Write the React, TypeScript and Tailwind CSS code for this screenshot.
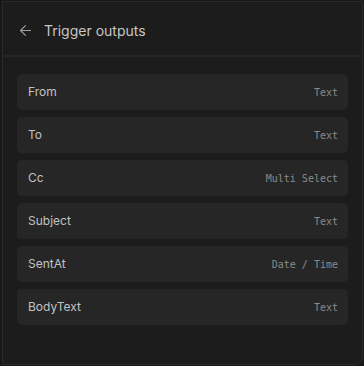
import React from 'react';
import { ArrowLeft } from 'lucide-react';

interface OutputField {
  name: string;
  type: string;
}

const fields: OutputField[] = [
  { name: 'From', type: 'Text' },
  { name: 'To', type: 'Text' },
  { name: 'Cc', type: 'Multi Select' },
  { name: 'Subject', type: 'Text' },
  { name: 'SentAt', type: 'Date / Time' },
  { name: 'BodyText', type: 'Text' },
];

const App: React.FC = () => {
  return (
    <div className="w-[364px] h-[366px] bg-[#181818] pl-[2px] pr-[1px] pt-[1px] pb-[1px] font-['Inter',sans-serif]">
      <div className="h-full flex flex-col bg-[#1c1c1c] border border-[#2b2b2b] rounded-br-lg">
        {/* header */}
        <div className="h-[55px] shrink-0 flex items-center gap-[10px] pl-[14px] pt-[3px] border-b-2 border-[#262626]">
          <ArrowLeft className="w-[17px] h-[17px] text-[#a0a0a0]" strokeWidth={1.5} />
          <span className="text-[14px] text-[#c6c6c6]">Trigger outputs</span>
        </div>

        {/* outputs */}
        <div className="flex flex-col gap-[7px] px-[14px] pt-[17px]">
          {fields.map(f => (
            <div
              key={f.name}
              className="h-[36px] flex items-center justify-between pl-[11px] pr-[10px] bg-[#262626] rounded-[5px]"
            >
              <span className="text-[12px] text-[#c2c2c2]">{f.name}</span>
              <span className="text-[10px] text-[#8a8a8a] font-['DejaVu_Sans_Mono',monospace]">{f.type}</span>
            </div>
          ))}
        </div>
      </div>
    </div>
  );
};

export default App;
